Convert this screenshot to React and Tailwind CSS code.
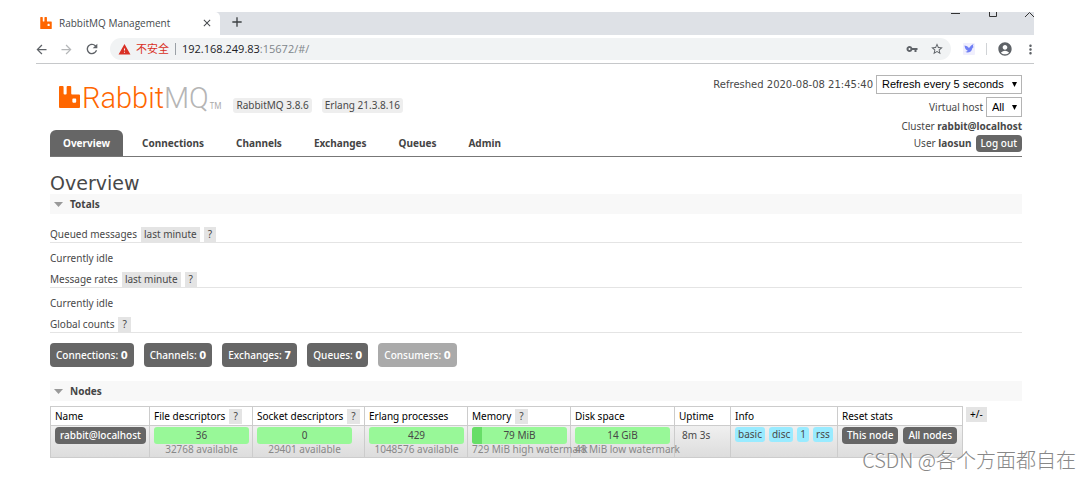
import React, { useState } from "react";
import { MdVpnKey, MdStarBorder, MdAccountCircle, MdMoreVert, MdWarning } from "react-icons/md";
import { MdArrowBack, MdArrowForward, MdRefresh, MdAdd, MdClose } from "react-icons/md";

const navItems = ["Overview", "Connections", "Channels", "Exchanges", "Queues", "Admin"];

const counts = [
  { label: "Connections", value: 0 },
  { label: "Channels", value: 0 },
  { label: "Exchanges", value: 7 },
  { label: "Queues", value: 0 },
  { label: "Consumers", value: 0, disabled: true },
];

const columns = [
  { name: "Name", width: "w-[99px]" },
  { name: "File descriptors", width: "w-[103px]", help: true },
  { name: "Socket descriptors", width: "w-[112px]", help: true },
  { name: "Erlang processes", width: "w-[103px]" },
  { name: "Memory", width: "w-[103px]", help: true },
  { name: "Disk space", width: "w-[104px]" },
  { name: "Uptime", width: "w-[56px]" },
  { name: "Info", width: "w-[107px]" },
  { name: "Reset stats", width: "w-[125px]" },
];

const usage = [
  { value: "36", note: "32768 available", used: 0 },
  { value: "0", note: "29401 available", used: 0 },
  { value: "429", note: "1048576 available", used: 0 },
  { value: "79 MiB", note: "729 MiB high watermark", used: 11, wide: true },
  { value: "14 GiB", note: "48 MiB low watermark", used: 0, wide: true },
];

const RabbitMark = ({ className }) => (
  <svg viewBox="0 0 22 23" className={className} fill="#ff6600" aria-hidden="true">
    <path
      fillRule="evenodd"
      d="M1 0h2.800q1 0 1 1v6.800q0 1 1 1h1.200q1 0 1-1V1q0-1 1-1h2.800q1 0 1 1v6.800q0 1 1 1H21q1 0 1 1V22q0 1-1 1H1q-1 0-1-1V1q0-1 1-1zM14 13.800v2.800q0 .8.8.8h2.400q.8 0 .8-.8v-2.800q0-.8-.8-.8h-2.400q-.8 0-.8.8z"
    />
  </svg>
);

const Help = () => (
  <button type="button" className="h-[15px] bg-[#e4e4e4] px-1 leading-[15px] text-[#444]">
    ?
  </button>
);

const DarkButton = ({ children }) => (
  <button type="button" className="h-[17px] rounded-[4px] bg-[#666] px-[5px] leading-[17px] font-medium whitespace-nowrap text-white">
    {children}
  </button>
);

const Dropdown = ({ id, label, options, className }) => (
  <span className={`relative inline-block ${className}`}>
    <select
      id={id}
      aria-label={label}
      className="h-full w-full appearance-none border border-[#b4b4b4] bg-white pl-[5px] font-['Liberation_Sans',sans-serif] text-[11px] text-black"
    >
      {options.map((option) => (
        <option key={option}>{option}</option>
      ))}
    </select>
    <svg viewBox="0 0 6 6" className="pointer-events-none absolute inset-y-0 right-[5px] my-auto size-[5px]">
      <path d="M0 0h6L3 6z" />
    </svg>
  </span>
);

const SectionBar = ({ title }) => (
  <h2 className="flex h-5 items-center gap-[7px] bg-[#f8f8f8] pl-1 font-bold text-[#444]">
    <svg viewBox="0 0 9 5" className="h-[5px] w-[9px]" fill="#999">
      <path d="M0 0h9L4.500 5z" />
    </svg>
    {title}
  </h2>
);

const SubHeading = ({ title, range }) => (
  <h3 className="flex h-4 items-start gap-1 border-b border-[#e4e4e4] leading-[15px]">
    {title}
    {range && (
      <button type="button" className="h-[15px] bg-[#e4e4e4] px-[3px] leading-[15px]">
        {range}
      </button>
    )}
    <Help />
  </h3>
);

const Browser = () => (
  <div className="border-b border-[#c6c8ca]">
    <div className="flex h-[23px] bg-[#dee1e6]">
      <div className="flex w-[184px] items-center rounded-tr-[5px] bg-white pr-[7px] pl-1 font-['Open_Sans',sans-serif] text-[10px] text-[#45494d]">
        <RabbitMark className="mt-[-2px] h-[12px] w-[12px]" />
        <span className="ml-[7px] flex-1 whitespace-nowrap">RabbitMQ Management</span>
        <button type="button" aria-label="Close tab" className="pb-[2px]">
          <MdClose size={12} />
        </button>
      </div>
      <button type="button" aria-label="New tab" className="ml-[9px] flex h-[19px] items-center text-[#3c4043]">
        <MdAdd size={16} />
      </button>
      <div className="ml-auto flex h-2 items-start gap-[28px] overflow-hidden text-black">
        <svg viewBox="0 0 9 5" className="h-[5px] w-[9px]" stroke="#333" fill="none">
          <path d="M0 1.500h9" />
        </svg>
        <svg viewBox="0 0 9 5" className="h-[5px] w-[9px]" stroke="#333" fill="none">
          <path d="M1.500 0v4.500h7V0" />
        </svg>
        <svg viewBox="0 0 9 5" className="h-[5px] w-[9px]" stroke="#333" fill="none">
          <path d="M0 5L4.500 .5 9 5" />
        </svg>
      </div>
    </div>
    <div className="flex h-7 items-center text-[#5f6368]">
      <button type="button" aria-label="Back" className="ml-[-2px]">
        <MdArrowBack size={15} />
      </button>
      <button type="button" aria-label="Forward" className="ml-[10px] text-[#b5b7b9]">
        <MdArrowForward size={15} />
      </button>
      <button type="button" aria-label="Reload" className="ml-[10px]">
        <MdRefresh size={16} />
      </button>
      <div className="ml-[10px] flex h-[22px] flex-1 items-center rounded-full bg-[#f1f3f4] pr-[7px] pl-2 font-['Open_Sans','Noto_Sans_CJK_SC',sans-serif] text-[11px]">
        <MdWarning size={13} className="text-[#d93025]" />
        <span className="ml-[5px] text-[#d93025]">不安全</span>
        <span className="mx-[6px] h-3 w-px bg-[#9aa0a6]" />
        <span className="flex-1 text-[#80868b]">
          <span className="text-[#202124]">192.168.249.83</span>:15672/#/
        </span>
        <MdVpnKey size={12} />
        <MdStarBorder size={14} className="ml-3" />
      </div>
      <svg viewBox="0 0 12 12" className="ml-3 size-3">
        <rect width="12" height="12" rx="1" fill="#f0effd" />
        <path d="M1.500 2.500q3 0 4.500 2.500 2-3 4.500-4-.8 2-.5 2.800h1q-2 1-2.200 3-1 2.700-4.300 2.700-1.500 0-2-.8 1.500 0 2.300-1-2.800-1-3.300-5.200z" fill="#6f7ff5" />
      </svg>
      <span className="ml-[11px] h-3 w-px bg-[#d0d3d6]" />
      <MdAccountCircle size={16} className="ml-[10px]" />
      <MdMoreVert size={15} className="mr-[-4px] ml-[10px]" />
    </div>
  </div>
);

const NodesTable = () => (
  <div className="mt-[5px] flex items-start gap-[3px]">
    <table className="w-[913px] table-fixed border-collapse border border-[#ccc]">
      <thead>
        <tr className="h-[19px] text-left text-black">
          {columns.map((col) => (
            <th key={col.name} className={`${col.width} border border-[#ccc] p-0 pl-1 font-normal whitespace-nowrap`}>
              <span className="flex items-center gap-1">
                {col.name}
                {col.help && <Help />}
              </span>
            </th>
          ))}
        </tr>
      </thead>
      <tbody>
        <tr className="h-8 bg-linear-to-b from-[#f0f0f0] to-[#dcdcdc] align-top">
          <td className="border-x border-[#ccc] px-1 pt-px">
            <DarkButton>rabbit@localhost</DarkButton>
          </td>
          {usage.map((item) => (
            <td key={item.note} className="border-x border-[#ccc] px-1 pt-px">
              <div className="relative h-[17px] w-[95px] overflow-hidden rounded-[3px] bg-[#98f898] text-center leading-[17px]">
                <div className="absolute inset-y-0 left-0 bg-[#67de67]" style={{ width: `${item.used}%` }} />
                <span className="relative">{item.value}</span>
              </div>
              <div
                className={`w-[95px] leading-[11px] whitespace-nowrap text-[#888] ${item.wide ? "text-left" : "text-center"}`}
              >
                {item.note}
              </div>
            </td>
          ))}
          <td className="border-x border-[#ccc] pt-[2px] pl-[7px] leading-[15px]">8m 3s</td>
          <td className="border-x border-[#ccc] pt-px pl-1">
            <div className="flex gap-1 leading-[15px]">
              {["basic", "disc", "1", "rss"].map((tag) => (
                <abbr key={tag} className="rounded-[3px] bg-[#99ebff] px-[3px]">
                  {tag}
                </abbr>
              ))}
            </div>
          </td>
          <td className="border-x border-[#ccc] pt-px pl-1">
            <div className="flex gap-[5px]">
              <DarkButton>This node</DarkButton>
              <DarkButton>All nodes</DarkButton>
            </div>
          </td>
        </tr>
      </tbody>
    </table>
    <button type="button" className="mt-px h-[15px] bg-[#e4e4e4] px-1 leading-[15px] text-black">
      +/-
    </button>
  </div>
);

const App = () => {
  const [active, setActive] = useState("Overview");

  return (
    <div className="relative bg-white pt-3 pb-5 pl-9 font-['Noto_Sans',sans-serif] text-[10px] text-[#484848]">
      <div className="mr-[58px]">
        <Browser />
        <div className="mr-3 ml-[14px]">
          <header className="flex h-[66px] justify-between">
            <div className="flex items-start">
              <RabbitMark className="mt-[22px] ml-[9px] h-[22px] w-[21px]" />
              <span className="mt-[17px] ml-[2px] font-['Roboto',sans-serif] text-[29px] leading-[34px] font-light text-[#ff6600]">
                Rabbit<span className="text-[#b5b5b5]">MQ</span>
              </span>
              <span className="mt-[36px] ml-px text-[8px] leading-[12px] text-[#aaa]">TM</span>
              <span className="mt-[34px] ml-3 rounded-[3px] bg-[#eee] px-[3px] leading-[15px]">RabbitMQ 3.8.6</span>
              <span className="mt-[34px] ml-[10px] rounded-[3px] bg-[#eee] px-[3px] leading-[15px]">Erlang 21.3.8.16</span>
            </div>
            <div className="flex flex-col items-end pt-[11px]">
              <div className="flex items-center gap-[3px]">
                <label htmlFor="refresh" className="font-['DejaVu_Sans',sans-serif]">
                  Refreshed 2020-08-08 21:45:40
                </label>
                <Dropdown
                  id="refresh"
                  label="Refresh interval"
                  options={["Refresh every 5 seconds", "Refresh every 30 seconds", "Do not refresh"]}
                  className="h-[19px] w-[146px]"
                />
              </div>
              <div className="mt-[3px] flex items-center gap-[3px]">
                <label htmlFor="vhost">Virtual host</label>
                <Dropdown id="vhost" label="Virtual host" options={["All", "/"]} className="h-5 w-9" />
              </div>
              <div className="mt-[2px] leading-[15px]">
                Cluster <b>rabbit@localhost</b>
              </div>
              <div className="mt-px flex items-center gap-1">
                <span>
                  User <b>laosun</b>
                </span>
                <DarkButton>Log out</DarkButton>
              </div>
            </div>
          </header>

          <nav className="flex h-[27px] border-b border-[#777]">
            {navItems.map((item) => (
              <a
                key={item}
                href="#/"
                onClick={() => setActive(item)}
                className={`mr-[6px] rounded-t-[6px] px-[13px] leading-[26px] font-bold ${
                  active === item ? "bg-[#666] text-white" : "text-[#444]"
                }`}
              >
                {item}
              </a>
            ))}
          </nav>

          <h1 className="mt-4 font-['DejaVu_Sans',sans-serif] text-[19px] leading-[21px]">Overview</h1>
          <SectionBar title="Totals" />

          <div className="mt-[13px]">
            <SubHeading title="Queued messages" range="last minute" />
            <p className="mt-2 mb-[6px] leading-[15px]">Currently idle</p>
            <SubHeading title="Message rates" range="last minute" />
            <p className="mt-2 mb-[6px] leading-[15px]">Currently idle</p>
            <SubHeading title="Global counts" />
          </div>

          <div className="mt-[10px] mb-[14px] flex gap-[10px]">
            {counts.map((item) => (
              <a
                key={item.label}
                href="#/"
                className={`h-6 rounded-[4px] px-[6px] leading-6 font-medium text-white ${
                  item.disabled ? "bg-[#aaa]" : "bg-[#666]"
                }`}
              >
                {item.label}: <b className="font-['DejaVu_Sans',sans-serif]">{item.value}</b>
              </a>
            ))}
          </div>

          <SectionBar title="Nodes" />
          <NodesTable />
        </div>
      </div>

      <div className="absolute right-4 bottom-[6px] font-['Noto_Sans_CJK_SC',sans-serif] text-[20px] leading-6 font-light text-[#888] [text-shadow:1px_1px_0_white]">
        CSDN @各个方面都自在
      </div>
    </div>
  );
};

export default App;
